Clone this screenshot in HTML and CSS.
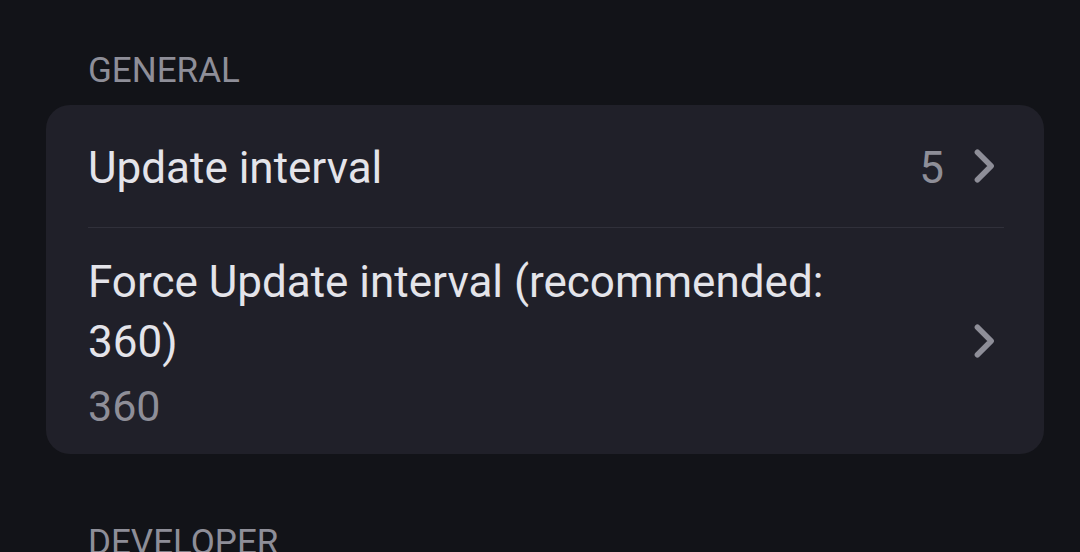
FILE: index.html
```html
<!DOCTYPE html>
<html lang="en">
<head>
<meta charset="utf-8">
<title>Settings</title>
<link rel="stylesheet" href="styles.css">
</head>
<body>
<main class="settings">
  <h2 class="section-title">GENERAL</h2>
  <section class="card">
    <div class="row row-single">
      <span class="row-title row-title-single">Update interval</span>
      <span class="row-value">5</span>
      <svg class="chevron" viewBox="0 0 24 24" aria-hidden="true"><polyline points="9.6,7 14.6,12 9.6,17"/></svg>
    </div>
    <div class="divider"></div>
    <div class="row row-multi">
      <div class="row-text">
        <div class="row-title">Force Update interval (recommended: 360)</div>
        <div class="row-summary">360</div>
      </div>
      <svg class="chevron" viewBox="0 0 24 24" aria-hidden="true"><polyline points="9.6,7 14.6,12 9.6,17"/></svg>
    </div>
  </section>
  <h2 class="section-title section-title-next">DEVELOPER</h2>
</main>
</body>
</html>
```

FILE: styles.css
```css
html, body {
  margin: 0;
  height: 100%;
  overflow: hidden;
}

body {
  background: #121318;
  font-family: Roboto, "Noto Sans", sans-serif;
  color: #e4e4ea;
}

.settings {
  padding: 47px 36px 0 46px;
}

.section-title {
  margin: 0;
  padding-left: 42px;
  font-size: 35px;
  font-weight: 400;
  line-height: 48px;
  color: #8e8e98;
  height: 48px;
  margin-bottom: 10px;
}

.section-title-next {
  margin-top: 65px;
}

.card {
  background: #202029;
  border-radius: 24px;
}

.row {
  display: flex;
  align-items: center;
  padding-left: 42px;
  padding-right: 27px;
}

.row-single {
  min-height: 122px;
}

.row-multi {
  min-height: 226px;
}

.row-title {
  font-size: 44px;
  line-height: 60px;
  color: #e4e4ea;
}

.row-title-single {
  flex: 1;
  padding-top: 4px;
}

.row-value {
  font-size: 44px;
  line-height: 60px;
  color: #8e8e98;
  padding-top: 4px;
  margin-right: 7px;
}

.row-text {
  flex: 1;
  padding-top: 6px;
  margin-right: 80px;
}

.row-summary {
  margin-top: 4px;
  font-size: 43px;
  line-height: 60px;
  color: #8e8e98;
}

.chevron {
  width: 66px;
  height: 66px;
  flex: none;
  fill: none;
  stroke: #8e8e98;
  stroke-width: 2;
  stroke-linecap: round;
  stroke-linejoin: round;
}

.divider {
  height: 1px;
  background: #30303a;
  margin: 0 40px 0 42px;
}
```
